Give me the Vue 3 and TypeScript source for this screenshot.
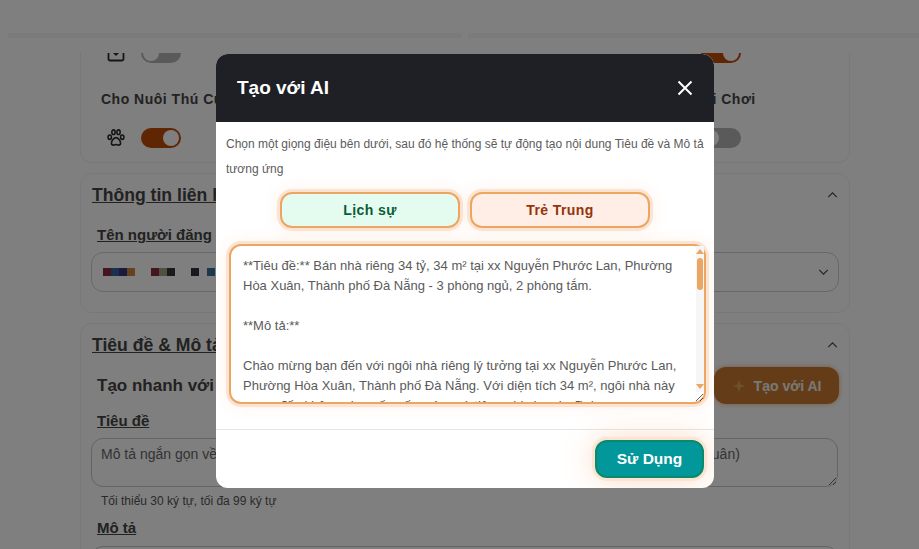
<script setup lang="ts">
const content = `**Tiêu đề:** Bán nhà riêng 34 tỷ, 34 m² tại xx Nguyễn Phước Lan, Phường Hòa Xuân, Thành phố Đà Nẵng - 3 phòng ngủ, 2 phòng tắm.

**Mô tả:**

Chào mừng bạn đến với ngôi nhà riêng lý tưởng tại xx Nguyễn Phước Lan, Phường Hòa Xuân, Thành phố Đà Nẵng. Với diện tích 34 m², ngôi nhà này mang đến không gian sống ấm cúng và tiện nghi cho gia đình.

Ngôi nhà có 3 phòng ngủ và 2 phòng tắm.`

const titleHint = 'Mô tả ngắn gọn về loại hình bất động sản, diện tích, địa chỉ (VD: Bán nhà 50 m² tại Phường Hòa Xuân)'

// redacted name in the select, one colour per 8px cell
const nameBlocks = [
  '#8c2c40', '#34609c', '#30367f', '#c98436',
  'transparent', 'transparent',
  '#8c2c40', '#a39f80', '#34343a',
  'transparent', 'transparent',
  '#34343a',
  'transparent',
  '#34709c',
]
</script>

<template>
  <div class="page">
    <div class="topbar">
      <span class="strip strip-left"></span>
      <span class="strip strip-right"></span>
    </div>
    <main class="content">
      <section class="card card-first">
        <div class="amenity-grid">
          <div class="amenity">
            <div class="amenity-row amenity-row-clipped">
              <svg class="amenity-icon" viewBox="0 0 20 20" fill="none" stroke="#2b2b2b" stroke-width="1.8">
                <rect x="2.500" y="2" width="15" height="15.500" rx="1.500" />
                <path d="M7 10h6l-3 3z" fill="#2b2b2b" stroke="none" />
              </svg>
              <span class="toggle"><i></i></span>
            </div>
          </div>
          <div></div>
          <div class="amenity">
            <div class="amenity-row amenity-row-clipped">
              <span class="icon-gap"></span>
              <span class="toggle on"><i></i></span>
            </div>
          </div>
          <div class="amenity">
            <div class="amenity-label">Cho Nuôi Thú Cưng</div>
            <div class="amenity-row">
              <svg class="amenity-icon" viewBox="0 0 24 24" fill="none" stroke="#2b2b2b" stroke-width="1.9">
                <ellipse cx="4.500" cy="11" rx="2" ry="2.600" />
                <ellipse cx="9" cy="5" rx="2" ry="2.800" />
                <ellipse cx="15" cy="5" rx="2" ry="2.800" />
                <ellipse cx="19.500" cy="11" rx="2" ry="2.600" />
                <path d="M12 11.500c-2.600 0-5.500 4.200-5.500 6.700 0 1.600 1.200 2.300 2.500 2.300 1.200 0 2-.6 3-.6s1.800.6 3 .6c1.300 0 2.500-.7 2.500-2.300 0-2.500-2.900-6.700-5.500-6.700z" />
              </svg>
              <span class="toggle on"><i></i></span>
            </div>
          </div>
          <div></div>
          <div class="amenity">
            <div class="amenity-label">Khu Vui Chơi</div>
            <div class="amenity-row">
              <span class="icon-gap"></span>
              <span class="toggle"><i></i></span>
            </div>
          </div>
        </div>
      </section>

      <section class="card card-contact">
        <div class="card-head">
          <h2>Thông tin liên hệ</h2>
          <svg class="chevron" viewBox="0 0 12 7"><path d="M1 6l5-5 5 5" /></svg>
        </div>
        <label class="field-label field-label-name">Tên người đăng</label>
        <div class="select">
          <div class="blocks">
            <span v-for="(color, i) in nameBlocks" :key="i" :style="{ background: color }"></span>
          </div>
          <svg class="chevron" viewBox="0 0 12 7"><path d="M1 1l5 5 5-5" /></svg>
        </div>
      </section>

      <section class="card card-title">
        <div class="card-head">
          <h2>Tiêu đề &amp; Mô tả</h2>
          <svg class="chevron" viewBox="0 0 12 7"><path d="M1 6l5-5 5 5" /></svg>
        </div>
        <div class="quick">
          <h3>Tạo nhanh với AI</h3>
          <button class="ai-btn">
            <svg class="spark" viewBox="0 0 16 16"><path d="M8 1l1.800 5.200L15 8l-5.200 1.800L8 15l-1.800-5.200L1 8l5.200-1.800z" /></svg>
            Tạo với AI
          </button>
        </div>
        <label class="field-label field-label-title">Tiêu đề</label>
        <textarea class="field-text" :placeholder="titleHint" readonly></textarea>
        <p class="hint">Tối thiểu 30 ký tự, tối đa 99 ký tự</p>
        <label class="field-label">Mô tả</label>
        <textarea class="field-text field-text-desc" readonly></textarea>
      </section>
    </main>

    <div class="backdrop"></div>

    <div class="dialog">
      <header class="dialog-head">
        <h1>Tạo với AI</h1>
        <svg class="close" viewBox="0 0 16 16"><path d="M1.500 1.500l13 13M14.500 1.500l-13 13" /></svg>
      </header>
      <div class="dialog-body">
        <p class="intro">Chọn một giọng điệu bên dưới, sau đó hệ thống sẽ tự động tạo nội dung Tiêu đề và Mô tả tương ứng</p>
        <div class="tones">
          <button class="tone tone-polite">Lịch sự</button>
          <button class="tone tone-young">Trẻ Trung</button>
        </div>
        <div class="result-wrap">
          <textarea class="result" :value="content" readonly></textarea>
          <div class="scrollbar">
            <span class="arrow arrow-up"></span>
            <span class="thumb"></span>
            <span class="arrow arrow-down"></span>
          </div>
        </div>
      </div>
      <footer class="dialog-foot">
        <button class="use-btn">Sử Dụng</button>
      </footer>
    </div>
  </div>
</template>

<style>
html, body {
  margin: 0;
  overflow: hidden;
}
</style>

<style scoped>
.page {
  position: relative;
  width: 919px;
  height: 549px;
  overflow: hidden;
  background: #fff;
  font-family: "Liberation Sans", Arial, sans-serif;
  color: #333;
}

.topbar {
  height: 53px;
  box-sizing: border-box;
  padding: 33px 0 0 8px;
  display: flex;
  gap: 6px;
}

.strip {
  height: 5px;
  background: #f7f7f7;
}

.strip-left {
  width: 454px;
}

.strip-right {
  flex: 1;
}

.content {
  height: 496px;
  overflow: hidden;
  box-sizing: border-box;
  padding: 0 69px 0 80px;
  display: flex;
  flex-direction: column;
  gap: 10px;
}

.card {
  border: 1px solid #f0f0f0;
  border-radius: 12px;
  padding: 9px 10px 0;
  flex: none;
  box-sizing: border-box;
}

.card-first {
  height: 110px;
  border-top: none;
  border-radius: 0 0 12px 12px;
  padding: 0 0 0 20px;
  overflow: hidden;
}

.amenity-grid {
  display: grid;
  grid-template-columns: repeat(3, 280px);
}

.amenity-row {
  display: flex;
  align-items: center;
  gap: 15px;
  height: 20px;
}

.amenity-row-clipped {
  margin-top: -10px;
}

.amenity-label {
  margin: 27px 0 20px;
  font-size: 14px;
  font-weight: 700;
  line-height: 18px;
  letter-spacing: 0.5px;
  white-space: nowrap;
  color: #444;
}

.amenity-icon {
  width: 20px;
  height: 20px;
  margin-left: 5px;
  flex: none;
}

.icon-gap {
  width: 20px;
  margin-left: 5px;
  flex: none;
}

.toggle {
  position: relative;
  width: 40px;
  height: 20px;
  border-radius: 10px;
  background: #b5b5b5;
  flex: none;
}

.toggle i {
  position: absolute;
  top: 2px;
  left: 2px;
  width: 16px;
  height: 16px;
  border-radius: 50%;
  background: #fff;
}

.toggle.on {
  background: #c04c08;
}

.toggle.on i {
  left: 22px;
}

.card-contact {
  height: 140px;
}

.card-head {
  display: flex;
  justify-content: space-between;
  align-items: center;
  padding-left: 1px;
}

.card-head h2 {
  margin: 0;
  font-size: 17.600px;
  line-height: 24px;
  font-weight: 700;
  color: #444;
  text-decoration: underline;
}

.chevron {
  width: 11px;
  height: 6px;
  fill: none;
  stroke: #444;
  stroke-width: 1.300;
  margin-right: 1px;
}

.field-label {
  display: block;
  margin-left: 6px;
  font-size: 15px;
  font-weight: 700;
  line-height: 20px;
  color: #444;
  text-decoration: underline;
}

.field-label-name {
  margin-top: 18px;
  margin-bottom: 7px;
}

.field-label-title {
  margin-top: 7px;
}

.select {
  height: 40px;
  box-sizing: border-box;
  border: 1px solid #cfcfcf;
  border-radius: 12px;
  display: flex;
  align-items: center;
  justify-content: space-between;
  padding: 0 9px 0 11px;
}

.select .chevron {
  margin-right: 0;
}

.blocks {
  display: flex;
}

.blocks span {
  width: 8px;
  height: 8px;
}

.quick {
  display: flex;
  justify-content: space-between;
  align-items: center;
  margin: 10px 0 0 6px;
}

.quick h3 {
  margin: 0;
  font-size: 17px;
  font-weight: 700;
  color: #444;
}

.ai-btn {
  width: 125px;
  height: 37px;
  border: none;
  border-radius: 12px;
  background: #c87a30;
  box-shadow: 0 0 5px rgba(220, 130, 50, 0.6);
  color: #f4f0ea;
  font: 700 14px "Liberation Sans", Arial, sans-serif;
  display: flex;
  align-items: center;
  justify-content: center;
  gap: 8px;
  padding: 0;
}

.spark {
  width: 14px;
  height: 14px;
  fill: #e0a050;
}

.field-text {
  display: block;
  box-sizing: border-box;
  width: 747px;
  height: 49px;
  margin: 7px 0 0;
  padding: 6px 9px;
  border: 1px solid #c8c8c8;
  border-radius: 12px;
  outline: none;
  background: #fff;
  font: 14px/18px "Liberation Sans", Arial, sans-serif;
  overflow: hidden;
  white-space: nowrap;
}

.field-text::placeholder {
  color: #666;
  opacity: 1;
}

.field-text-desc {
  margin-top: 8px;
}

.hint {
  margin: 6px 0 8px 10px;
  font-size: 12px;
  line-height: 17px;
  color: #555;
}

.backdrop {
  position: absolute;
  inset: 0;
  background: rgba(0, 0, 0, 0.5);
}

.dialog {
  position: absolute;
  left: 216px;
  top: 54px;
  width: 498px;
  height: 434px;
  border-radius: 12px;
  background: #fff;
  display: flex;
  flex-direction: column;
  overflow: hidden;
}

.dialog-head {
  height: 68px;
  flex: none;
  background: #1e2025;
  display: flex;
  align-items: center;
  justify-content: space-between;
  padding: 0 21px;
}

.dialog-head h1 {
  margin: 0;
  font-size: 19px;
  font-weight: 700;
  color: #fff;
}

.close {
  width: 16px;
  height: 16px;
  fill: none;
  stroke: #fff;
  stroke-width: 2;
}

.dialog-body {
  flex: 1;
  padding: 10px 10px 0;
  min-height: 0;
}

.intro {
  margin: 0;
  font-size: 12px;
  line-height: 25px;
  color: #5c5c5c;
}

.tones {
  display: flex;
  justify-content: center;
  gap: 10px;
  margin-top: 10px;
}

.tone {
  width: 180px;
  height: 36px;
  box-sizing: border-box;
  border: 2px solid #eda562;
  border-radius: 12px;
  box-shadow: 0 0 0 3px #fbe4d4, 0 0 18px rgba(240, 150, 90, 0.18);
  font: 700 14px "Liberation Sans", Arial, sans-serif;
  letter-spacing: 0.4px;
}

.tone-polite {
  background: #e4fcef;
  color: #0b5c37;
}

.tone-young {
  background: #ffeee5;
  color: #93350d;
}

.result-wrap {
  position: relative;
  width: 477px;
  height: 160px;
  margin: 16px 0 0 3px;
}

.result {
  display: block;
  box-sizing: border-box;
  width: 477px;
  height: 160px;
  padding: 10px 9px 10px 12px;
  border: 2px solid #eda562;
  border-radius: 12px;
  box-shadow: 0 0 0 3px #fbe4d4, 0 0 18px rgba(240, 150, 90, 0.18);
  outline: none;
  overflow: hidden;
  resize: both;
  font: 13px/20px "Liberation Sans", Arial, sans-serif;
  color: #5a5a5a;
}

.scrollbar {
  position: absolute;
  top: 2px;
  right: 2px;
  width: 8px;
  height: 146px;
  background: #f6f6f6;
  display: flex;
  flex-direction: column;
  align-items: center;
}

.thumb {
  width: 6px;
  height: 32px;
  margin-top: 4px;
  border-radius: 3px;
  background: #eda562;
}

.arrow {
  width: 0;
  height: 0;
  margin-top: 3px;
  border-left: 4px solid transparent;
  border-right: 4px solid transparent;
}

.arrow-up {
  border-bottom: 5px solid #eda562;
}

.arrow-down {
  margin-top: auto;
  margin-bottom: 3px;
  border-top: 5px solid #eda562;
}

.dialog-foot {
  height: 59px;
  flex: none;
  box-sizing: border-box;
  border-top: 1px solid #e6e6e6;
  display: flex;
  justify-content: flex-end;
  align-items: center;
  padding: 0 10px;
}

.use-btn {
  width: 109px;
  height: 38px;
  box-sizing: border-box;
  border: 2px solid #0a8a6b;
  border-radius: 12px;
  background: #02979a;
  box-shadow: 0 0 0 3px #fbe4d4, 0 0 30px rgba(240, 150, 90, 0.4);
  color: #fff;
  font: 700 15.500px "Liberation Sans", Arial, sans-serif;
  padding-bottom: 2px;
}
</style>
